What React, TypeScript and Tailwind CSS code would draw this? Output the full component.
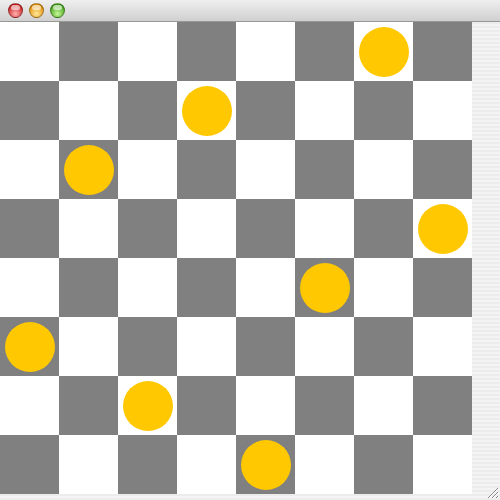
const queens = [6, 3, 1, 7, 5, 0, 2, 4];

const Light = ({ from, to }: { from: string; to: string }) => (
  <div
    className="w-[15px] h-[15px] rounded-full border border-black/30"
    style={{ background: `radial-gradient(circle at 50% 75%, ${from} 0%, ${to} 80%)` }}
  >
    <div className="mx-auto mt-[1px] w-[9px] h-[5px] rounded-full bg-white/60" />
  </div>
);

const App = () => {
  return (
    <div className="w-[500px] h-[500px] overflow-hidden bg-[#ececec] flex flex-col">
      <div className="h-[22px] flex items-center gap-[6px] pl-[8px] bg-gradient-to-b from-[#efefef] to-[#d0d0d0] border-b border-[#979797] rounded-t-[4px]">
        <Light from="#ffb0b0" to="#c81a1a" />
        <Light from="#ffe99a" to="#e08a00" />
        <Light from="#c8f79a" to="#3a9e10" />
      </div>
      <div className="flex flex-1 bg-[repeating-linear-gradient(to_bottom,#ececec_0px,#ececec_2px,#f4f4f4_2px,#f4f4f4_4px)]">
        <div className="flex flex-col">
          <div className="grid grid-cols-[repeat(8,59px)] grid-rows-[repeat(8,59px)]">
            {Array.from({ length: 64 }).map((_, i) => {
              const r = Math.floor(i / 8);
              const c = i % 8;
              const dark = (r + c) % 2 === 1;
              return (
                <div
                  key={i}
                  className={`flex items-center justify-center ${dark ? 'bg-[#808080]' : 'bg-white'}`}
                >
                  {queens[r] === c && <div className="w-[50px] h-[50px] rounded-full bg-[#ffc800]" />}
                </div>
              );
            })}
          </div>
        </div>
        <div className="flex-1 flex flex-col justify-end items-end">
          <svg width="14" height="14" viewBox="0 0 14 14" className="mb-[1px] mr-[1px]">
            <path d="M13 3 L3 13 M13 7 L7 13 M13 11 L11 13" stroke="#888" strokeWidth="1" />
            <path d="M13 4 L4 13 M13 8 L8 13" stroke="#fff" strokeWidth="1" />
          </svg>
        </div>
      </div>
    </div>
  );
};

export default App;
